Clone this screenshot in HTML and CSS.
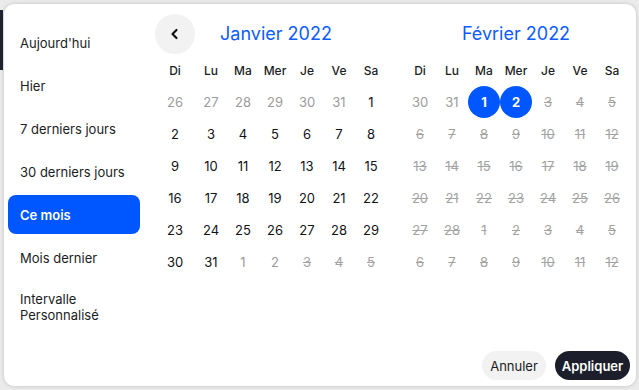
FILE: index.html
```html
<!DOCTYPE html>
<html lang="fr">
<head>
  <meta charset="UTF-8">
  <meta name="viewport" content="width=device-width, initial-scale=1.0">
  <title>Période</title>
  <link rel="stylesheet" href="styles.css">
</head>
<body>
  <div class="page-bg">
    <div class="page-nav"></div>
  </div>
  <div class="popup">
    <div class="picker">
      <ul class="presets">
        <li>Aujourd'hui</li>
        <li>Hier</li>
        <li>7 derniers jours</li>
        <li>30 derniers jours</li>
        <li class="active">Ce mois</li>
        <li>Mois dernier</li>
        <li class="multi">Intervalle Personnalisé</li>
      </ul>
      <div class="calendars">
        <div class="month month-left">
          <div class="month-head">
            <button class="nav-btn" aria-label="Mois précédent">
              <svg width="14" height="14" viewBox="0 0 14 14"><path d="M8.5 3 L4.5 7 L8.5 11" fill="none" stroke="#111" stroke-width="2.2" stroke-linecap="round" stroke-linejoin="round"/></svg>
            </button>
            <div class="month-title">Janvier 2022</div>
          </div>
          <div class="grid" id="jan"></div>
        </div>
        <div class="month month-right">
          <div class="month-head">
            <div class="month-title">Février 2022</div>
          </div>
          <div class="grid" id="feb"></div>
        </div>
      </div>
    </div>
    <div class="actions">
      <button class="btn btn-cancel">Annuler</button>
      <button class="btn btn-apply">Appliquer</button>
    </div>
  </div>

  <script>
    const weekdays = ['Di', 'Lu', 'Ma', 'Mer', 'Je', 'Ve', 'Sa'];

    // [day, kind] kind: n = normal, m = muted, x = disabled, s = selected
    const jan = [
      [26,'m'],[27,'m'],[28,'m'],[29,'m'],[30,'m'],[31,'m'],[1,'n'],
      [2,'n'],[3,'n'],[4,'n'],[5,'n'],[6,'n'],[7,'n'],[8,'n'],
      [9,'n'],[10,'n'],[11,'n'],[12,'n'],[13,'n'],[14,'n'],[15,'n'],
      [16,'n'],[17,'n'],[18,'n'],[19,'n'],[20,'n'],[21,'n'],[22,'n'],
      [23,'n'],[24,'n'],[25,'n'],[26,'n'],[27,'n'],[28,'n'],[29,'n'],
      [30,'n'],[31,'n'],[1,'m'],[2,'m'],[3,'x'],[4,'x'],[5,'x']
    ];

    const feb = [[30,'m'],[31,'m'],[1,'s'],[2,'s']];
    for (let d = 3; d <= 28; d++) feb.push([d, 'x']);
    for (let d = 1; d <= 12; d++) feb.push([d, 'x']);

    const kinds = { n: '', m: ' muted', x: ' disabled', s: ' selected' };

    function fill(id, days) {
      const grid = document.getElementById(id);
      let html = '';
      weekdays.forEach(w => { html += `<div class="wd">${w}</div>`; });
      days.forEach(([d, k]) => {
        html += `<div class="cell"><span class="day${kinds[k]}">${d}</span></div>`;
      });
      grid.innerHTML = html;
    }

    fill('jan', jan);
    fill('feb', feb);
  </script>
</body>
</html>
```

FILE: styles.css
```css
* {
  box-sizing: border-box;
}
body {
  margin: 0;
  width: 639px;
  height: 390px;
  overflow: hidden;
  background-color: #ebebeb;
  font-family: "Inter", "Noto Sans", sans-serif;
  color: #1b1d24;
  position: relative;
}
.page-bg {
  height: 100%;
}
.page-nav {
  width: 3px;
  height: 60px;
  margin-top: 10px;
  background-color: #1f2430;
}
.popup {
  position: absolute;
  top: 4px;
  left: 4px;
  width: 632px;
  height: 382px;
  background: #fff;
  border-radius: 10px;
  box-shadow: 0 0 4px rgba(0, 0, 0, 0.18);
  display: flex;
  flex-direction: column;
}
.picker {
  display: flex;
  flex: 1;
}
.presets {
  list-style: none;
  margin: 0;
  padding: 19px 0 0 4px;
  width: 151px;
  display: flex;
  flex-direction: column;
  gap: 4px;
}
.presets li {
  width: 132px;
  min-height: 39px;
  padding: 0 12px;
  display: flex;
  align-items: center;
  font-size: 13px;
  line-height: 16px;
  border-radius: 8px;
  color: #1b1d24;
}
.presets li.multi {
  align-items: flex-start;
  padding-top: 10px;
}
.presets li.active {
  background-color: #0057ff;
  color: #fff;
  font-weight: 600;
}
.calendars {
  display: flex;
  gap: 17px;
  padding-top: 9px;
}
.month-left {
  width: 232px;
}
.month-right {
  width: 224px;
}
.month-head {
  height: 41px;
  display: flex;
  align-items: center;
}
.nav-btn {
  width: 40px;
  height: 40px;
  border: none;
  border-radius: 50%;
  background-color: #f2f2f2;
  display: flex;
  align-items: center;
  justify-content: center;
  padding: 0;
  cursor: pointer;
}
.month-title {
  flex: 1;
  text-align: center;
  font-size: 18px;
  color: #0d5cff;
}
.month-left .month-title {
  padding-right: 30px;
}
.grid {
  display: grid;
  grid-auto-rows: 32px;
}
.month-left .grid {
  grid-template-columns: 40px repeat(6, 32px);
}
.month-right .grid {
  grid-template-columns: repeat(7, 32px);
}
.wd {
  display: flex;
  align-items: center;
  justify-content: center;
  font-size: 12px;
  font-weight: 500;
  color: #1b1d24;
}
.cell {
  display: flex;
  align-items: center;
  justify-content: center;
}
.day {
  width: 32px;
  height: 32px;
  display: flex;
  align-items: center;
  justify-content: center;
  font-size: 13px;
  font-weight: 400;
  color: #111318;
  border-radius: 50%;
}
.day.muted {
  color: #9b9b9b;
}
.day.disabled {
  color: #a3a3a3;
  text-decoration: line-through;
}
.day.selected {
  background-color: #0057ff;
  color: #fff;
  font-weight: 700;
}
.actions {
  display: flex;
  justify-content: flex-end;
  gap: 9px;
  padding: 0 6px 6px 0;
}
.btn {
  height: 29px;
  border: none;
  border-radius: 15px;
  font-family: inherit;
  font-size: 13px;
  padding: 0;
  cursor: pointer;
}
.btn-cancel {
  width: 64px;
  background-color: #f2f2f2;
  color: #1b1d24;
}
.btn-apply {
  width: 75px;
  background-color: #1c1f2b;
  color: #fff;
  font-weight: 600;
}
```
